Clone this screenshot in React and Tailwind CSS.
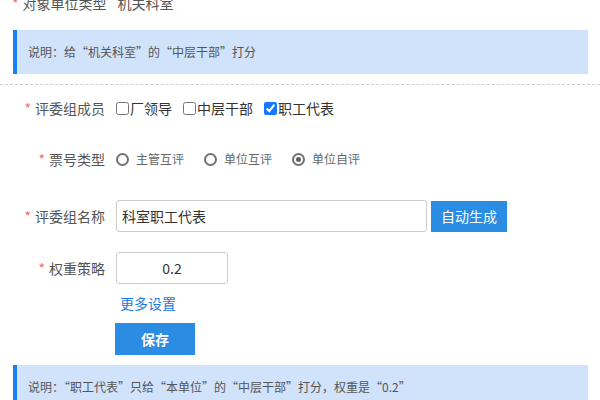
import { useState } from 'react';

const font = { fontFamily: '"Noto Sans CJK SC", "Noto Sans", sans-serif' };

function Label({ children }) {
  return (
    <div className="flex w-[105px] shrink-0 items-center justify-end text-[14px] text-[#555]">
      <span className="mr-[4px] text-[#f56c6c]">*</span>
      {children}
    </div>
  );
}

function Radio({ label, checked }) {
  return (
    <label className="flex items-center text-[12px] text-[#666]">
      <span className="flex h-[13px] w-[13px] items-center justify-center rounded-full border-2 border-[#707070]">
        {checked && <span className="h-[5px] w-[5px] rounded-full bg-[#606060]" />}
      </span>
      <span className="ml-[7px]">{label}</span>
    </label>
  );
}

function Check({ label, checked }) {
  return (
    <label className="flex items-center text-[14px] text-[#333]">
      <input type="checkbox" defaultChecked={checked} className="m-0 h-[13px] w-[13px] accent-[#1677ff]" />
      <span className="ml-[1px]">{label}</span>
    </label>
  );
}

function Note({ children }) {
  return (
    <div className="ml-[13px] flex h-[44px] w-[575px] items-center border-l-[4px] border-[#1a7ef5] bg-[#d0e3fa] pl-[11px] text-[12px] text-[#555]">
      {children}
    </div>
  );
}

export default function App() {
  const [name, setName] = useState('科室职工代表');
  const [weight, setWeight] = useState('0.2');

  return (
    <div className="h-[400px] w-[600px] overflow-hidden bg-white leading-[20px]" style={font}>
      <div className="-mt-[7px] flex h-[20px] items-center pl-[12px] text-[14px] text-[#555]">
        <span className="mr-[4px] text-[#f56c6c]">*</span>
        对象单位类型
        <span className="ml-[11px]">机关科室</span>
      </div>

      <div className="mt-[17px]">
        <Note>说明：给“机关科室”的“中层干部”打分</Note>
      </div>

      <div className="mt-[10px] border-t border-dashed border-[#cfcfcf]" />

      <div className="mt-[7px] flex h-[32px] items-center">
        <Label>评委组成员</Label>
        <div className="ml-[11px] flex items-center gap-[11px]">
          <Check label="厂领导" />
          <Check label="中层干部" />
          <Check label="职工代表" checked />
        </div>
      </div>

      <div className="mt-[19px] flex h-[32px] items-center">
        <Label>票号类型</Label>
        <div className="ml-[11px] flex items-center gap-[20px]">
          <Radio label="主管互评" />
          <Radio label="单位互评" />
          <Radio label="单位自评" checked />
        </div>
      </div>

      <div className="mt-[25px] flex h-[32px] items-center">
        <Label>评委组名称</Label>
        <input
          value={name}
          onChange={(e) => setName(e.target.value)}
          className="ml-[11px] h-[32px] w-[311px] rounded-[3px] border border-[#cccccc] px-[5px] text-[14px] text-[#333] outline-none"
        />
        <button className="ml-[4px] h-[31px] w-[76px] bg-[#2a8ce2] text-[14px] text-white">自动生成</button>
      </div>

      <div className="mt-[20px] flex h-[32px] items-center">
        <Label>权重策略</Label>
        <input
          value={weight}
          onChange={(e) => setWeight(e.target.value)}
          className="ml-[11px] h-[32px] w-[112px] rounded-[3px] border border-[#cccccc] text-center text-[14px] text-[#333] outline-none"
        />
      </div>

      <div className="mt-[9px] flex h-[20px] items-center pl-[120px] text-[14px] text-[#1a7de0]">更多设置</div>

      <div className="mt-[10px] pl-[115px]">
        <button className="h-[32px] w-[80px] bg-[#2a8ce2] text-[14px] font-bold text-white">保存</button>
      </div>

      <div className="mt-[10px]">
        <Note>说明：“职工代表”只给“本单位”的“中层干部”打分，权重是“0.2”</Note>
      </div>
    </div>
  );
}
